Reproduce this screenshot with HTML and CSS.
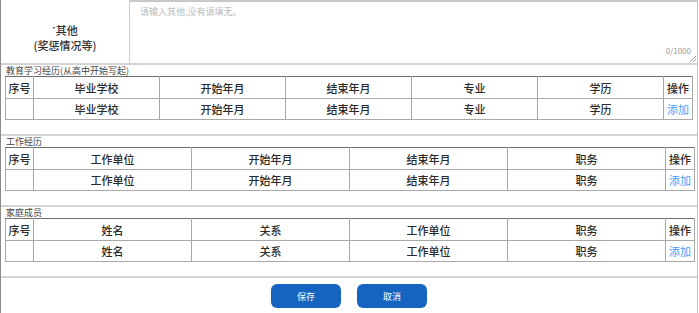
FILE: index.html
```html
<!DOCTYPE html>
<html>
<head>
  <meta charset="UTF-8">
  <title>个人信息 - 其他</title>
  <meta name="viewport" content="width=device-width,initial-scale=1.0">
  <link rel="stylesheet" href="styles.css">
</head>
<body>
  <div class="page">
    <div class="other-row">
      <div class="other-label"><span><i>*</i>其他</span><span>(奖惩情况等)</span></div>
      <div class="other-input">
        <div class="placeholder">请输入其他,没有请填无。</div>
        <div class="counter">0/1000</div>
        <svg class="grip" width="7" height="7" viewBox="0 0 7 7"><path d="M7 1L1 7M7 4L4 7" stroke="#999" stroke-width="1"/></svg>
      </div>
    </div>

    <div class="section">
      <div class="title">教育学习经历(从高中开始写起)</div>
      <table class="grid edu">
        <colgroup><col class="c-no"><col><col><col><col><col><col class="c-op"></colgroup>
        <tr><td>序号</td><td>毕业学校</td><td>开始年月</td><td>结束年月</td><td>专业</td><td>学历</td><td>操作</td></tr>
        <tr class="row"><td></td><td>毕业学校</td><td>开始年月</td><td>结束年月</td><td>专业</td><td>学历</td><td><a class="add">添加</a></td></tr>
      </table>
    </div>

    <div class="section">
      <div class="title">工作经历</div>
      <table class="grid">
        <colgroup><col class="c-no"><col><col><col><col><col class="c-op"></colgroup>
        <tr><td>序号</td><td>工作单位</td><td>开始年月</td><td>结束年月</td><td>职务</td><td>操作</td></tr>
        <tr class="row"><td></td><td>工作单位</td><td>开始年月</td><td>结束年月</td><td>职务</td><td><a class="add">添加</a></td></tr>
      </table>
    </div>

    <div class="section">
      <div class="title">家庭成员</div>
      <table class="grid">
        <colgroup><col class="c-no"><col><col><col><col><col class="c-op"></colgroup>
        <tr><td>序号</td><td>姓名</td><td>关系</td><td>工作单位</td><td>职务</td><td>操作</td></tr>
        <tr class="row"><td></td><td>姓名</td><td>关系</td><td>工作单位</td><td>职务</td><td><a class="add">添加</a></td></tr>
      </table>
    </div>

    <div class="actions">
      <button class="btn">保存</button>
      <button class="btn">取消</button>
    </div>
  </div>
</body>
</html>
```

FILE: styles.css
```css
body{margin:0;background:#fff;color:#333;font-family:"Noto Sans CJK SC","Microsoft YaHei",sans-serif;}

.page{
  width:698px;height:313px;box-sizing:border-box;
  border-left:1px solid #8a8a8a;border-right:1px solid #c4c4c4;
  overflow:hidden;
}

/* 其他 row */
.other-row{display:grid;grid-template-columns:129px 1fr;height:65px;border-bottom:2px solid #d4d4d4;box-sizing:border-box;}
.other-label{
  display:flex;flex-direction:column;align-items:center;justify-content:center;
  border-right:1px solid #d0d0d0;font-size:11px;line-height:13px;padding-top:12px;
  font-weight:500;color:#2f2f2f;
}
.other-label i{font-style:normal;font-size:7px;position:relative;top:-3px;color:#555;}
.other-input{position:relative;border-top:2px solid #c8c8c8;}
.placeholder{padding:3px 10px;font-size:9px;color:#bbb;}
.counter{position:absolute;right:6px;bottom:7px;font-size:8px;color:#999;}
.grip{position:absolute;right:1px;bottom:1px;}

/* sections */
.section{padding:0 0 14px 4px;border-bottom:2px solid #d4d4d4;}
.section .title{font-size:9px;line-height:11px;height:11px;color:#444;padding-left:1px;overflow:hidden;}

.grid{border-collapse:collapse;table-layout:fixed;width:690px;border:1px solid #6f6f6f;}
.grid.edu{width:688px;}
.grid td{
  border:1px solid #a8a8a8;text-align:center;
  font-size:11px;font-weight:500;color:#2a2a2a;
  height:20px;padding:0;white-space:nowrap;
}
.grid tr:first-child td{border-top-color:#6f6f6f;height:21px;}
.grid .c-no{width:28px;}
.grid .c-op{width:29px;}
.add{color:#409eff;font-weight:normal;cursor:pointer;}

/* buttons */
.actions{display:flex;justify-content:center;gap:16px;padding-top:6px;}
.btn{
  width:70px;height:24px;border:0;border-radius:6px;
  background:#1565c0;color:#fff;font-size:9px;font-family:inherit;cursor:pointer;
}
```
